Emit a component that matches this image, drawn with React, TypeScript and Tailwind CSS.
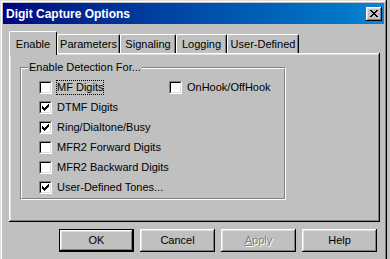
import React from 'react';

const raised =
  'shadow-[inset_-1px_-1px_#000000,inset_1px_1px_#ffffff,inset_-2px_-2px_#808080,inset_2px_2px_#dfdfdf]';

const checkPixels = [
  '......#',
  '.....##',
  '#...###',
  '##.###.',
  '#####..',
  '.###...',
  '..#....'
];

function CheckMark() {
  return (
    <svg width="7" height="7" viewBox="0 0 7 7" shapeRendering="crispEdges">
      {checkPixels.map((row, y) =>
        row.split('').map((c, x) =>
          c === '#' ? <rect key={`${x}-${y}`} x={x} y={y} width="1" height="1" fill="#000" /> : null
        )
      )}
    </svg>
  );
}

type CheckboxProps = {
  label: string;
  checked?: boolean;
  focused?: boolean;
};

function Checkbox({ label, checked, focused }: CheckboxProps) {
  return (
    <div className="flex items-center h-[20px] whitespace-nowrap">
      <div className="w-[13px] h-[13px] shrink-0 border border-t-[#808080] border-l-[#808080] border-r-white border-b-white">
        <div className="w-full h-full bg-white border border-t-black border-l-black border-r-[#dfdfdf] border-b-[#dfdfdf] flex items-center justify-center">
          {checked && <CheckMark />}
        </div>
      </div>
      <span
        className={
          'ml-[4px] leading-[13px] border ' +
          (focused ? 'border-dotted border-black' : 'border-transparent')
        }
      >
        {label}
      </span>
    </div>
  );
}

const tabs = [
  { name: 'Enable', width: 'w-[48px]' },
  { name: 'Parameters', width: 'w-[63px]' },
  { name: 'Signaling', width: 'w-[56px]' },
  { name: 'Logging', width: 'w-[51px]' },
  { name: 'User-Defined', width: 'w-[72px]' }
];

function Tabs() {
  return (
    <div className="flex items-end h-[22px]">
      {tabs.map((tab, index) =>
        index === 0 ? (
          <div
            key={tab.name}
            className={`${tab.width} h-[24px] -mb-[2px] relative z-10 bg-[#c0c0c0] rounded-t-[2px] border-l border-t border-r border-l-white border-t-white border-r-black flex items-start justify-center pt-[4px]`}
          >
            <span>{tab.name}</span>
          </div>
        ) : (
          <div
            key={tab.name}
            className={`${tab.width} h-[19px] bg-[#c0c0c0] rounded-t-[2px] border-l border-t border-r border-l-white border-t-white border-r-black flex items-center justify-center pt-[1px] shadow-[inset_-1px_0_#808080]`}
          >
            <span>{tab.name}</span>
          </div>
        )
      )}
    </div>
  );
}

type ButtonProps = {
  children: React.ReactNode;
  isDefault?: boolean;
  disabled?: boolean;
};

function Button({ children, isDefault, disabled }: ButtonProps) {
  return (
    <div className={'w-[75px] h-[23px] ' + (isDefault ? 'border border-black' : '')}>
      <div
        className={`w-full h-full bg-[#c0c0c0] flex items-center justify-center ${raised} ${
          disabled ? 'text-[#808080] [text-shadow:1px_1px_#ffffff]' : ''
        }`}
      >
        {children}
      </div>
    </div>
  );
}

export default function App() {
  return (
    <div className="w-[390px] h-[259px] overflow-hidden bg-[#c0c0c0] font-['Liberation_Sans',Arial,sans-serif] text-[11px] text-black">
      <div
        className={`w-[387px] h-[270px] p-[3px] bg-[#c0c0c0] shadow-[inset_-1px_-1px_#000000,inset_1px_1px_#dfdfdf,inset_-2px_-2px_#808080,inset_2px_2px_#ffffff]`}
      >
        <div className="h-[21px] bg-gradient-to-r from-[#000080] to-[#1084d0] flex items-center justify-between pl-[3px] pr-[2px]">
          <span className="text-white font-bold text-[12px] leading-none">Digit Capture Options</span>
          <div className={`w-[16px] h-[14px] bg-[#c0c0c0] flex items-center justify-center ${raised}`}>
            <svg width="8" height="7" viewBox="0 0 8 7" shapeRendering="crispEdges">
              <path
                d="M0 0h2v1h-2zM6 0h2v1h-2zM1 1h2v1h-2zM5 1h2v1h-2zM2 2h4v1h-4zM3 3h2v1h-2zM2 4h4v1h-4zM1 5h2v1h-2zM5 5h2v1h-2zM0 6h2v1h-2zM6 6h2v1h-2z"
                fill="#000"
              />
            </svg>
          </div>
        </div>

        <div className="px-[6px] pt-[7px]">
          <Tabs />
          <div className="w-[371px] h-[169px] bg-[#c0c0c0] shadow-[inset_-1px_-1px_#000000,inset_1px_1px_#ffffff,inset_-2px_-2px_#808080,inset_2px_2px_#dfdfdf] pt-[14px] pl-[11px]">
            <div className="relative w-[266px] h-[133px] border border-t-[#808080] border-l-[#808080] border-r-white border-b-white">
              <div className="w-full h-full border border-t-white border-l-white border-r-[#808080] border-b-[#808080] pt-[8px] pl-[17px] flex">
                <div className="w-[130px] flex flex-col">
                  <Checkbox label="MF Digits" focused />
                  <Checkbox label="DTMF Digits" checked />
                  <Checkbox label="Ring/Dialtone/Busy" checked />
                  <Checkbox label="MFR2 Forward Digits" />
                  <Checkbox label="MFR2 Backward Digits" />
                  <Checkbox label="User-Defined Tones..." checked />
                </div>
                <div className="flex flex-col">
                  <Checkbox label="OnHook/OffHook" />
                </div>
              </div>
              <span className="absolute -top-[7px] left-[7px] bg-[#c0c0c0] px-[1px] leading-[13px]">
                Enable Detection For...
              </span>
            </div>
          </div>

          <div className="flex justify-end gap-[6px] pr-[1px] mt-[7px]">
            <Button isDefault>OK</Button>
            <Button>Cancel</Button>
            <Button disabled>
              <span>
                <span className="underline">A</span>pply
              </span>
            </Button>
            <Button>Help</Button>
          </div>
        </div>
      </div>
    </div>
  );
}
